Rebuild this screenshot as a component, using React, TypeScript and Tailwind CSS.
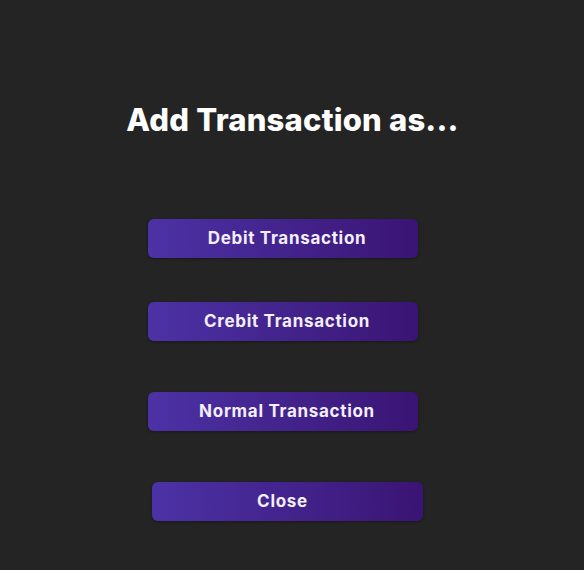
import React from "react";

const btn =
  "flex h-[39px] w-[270px] items-center justify-center rounded-md bg-gradient-to-r from-[#4c32a6] to-[#3a1474] text-[17px] font-bold leading-none tracking-[0.7px] text-[#f3efff] shadow-[0_1px_3px_rgba(0,0,0,0.35)]";

export default function App() {
  return (
    <div
      className="flex min-h-[570px] w-full flex-col bg-[#242424]"
      style={{ fontFamily: "Inter, 'Noto Sans', sans-serif" }}
    >
      <h1 className="mt-[102px] pl-[1px] text-center text-[31px] font-extrabold leading-[36px] tracking-[0.2px] text-white">
        Add Transaction as...
      </h1>
      <div className="mt-[81px] flex flex-col pl-[148px]">
        <button className={`${btn} pl-[8px]`}>Debit Transaction</button>
        <button className={`${btn} mt-[44px] pl-[8px]`}>Crebit Transaction</button>
        <button className={`${btn} mt-[51px] pl-[8px]`}>Normal Transaction</button>
      </div>
      <div className="mt-[51px] flex pl-[152px]">
        <button className={`${btn} h-[37px] w-[271px] pr-[10px]`}>Close</button>
      </div>
    </div>
  );
}
